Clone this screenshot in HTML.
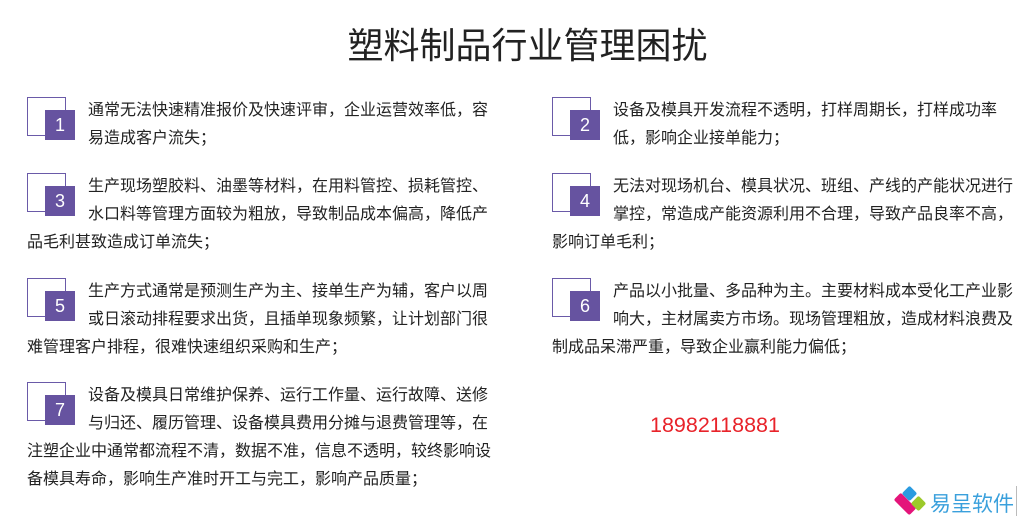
<!DOCTYPE html>
<html><head><meta charset="utf-8"><style>
body{margin:0;width:1021px;height:523px;background:#fff;position:relative;overflow:hidden;font-family:"Liberation Sans","Noto Sans CJK SC",sans-serif;color:#222}
.t{position:absolute;left:0;width:1055px;text-align:center;top:17px;font-size:36px;color:#222}
.it{position:absolute;font-size:16px;line-height:28px;white-space:nowrap}
.bx{float:left;position:relative;width:61px;height:46px}
.bx .o{position:absolute;left:0;top:0;width:37px;height:37px;border:1px solid #6a5aa8}
.bx .f{position:absolute;left:18px;top:13px;width:30px;height:30px;background:#6653a0;color:#fff;font-size:18px;line-height:30px;text-align:center}
.ph{position:absolute;left:650px;top:413px;font-size:21.5px;color:#e8232a}
</style></head><body>
<div class="t">塑料制品行业管理困扰</div>

<div class="it" style="left:27px;top:97px"><div class="bx"><div class="o"></div><div class="f">1</div></div>通常无法快速精准报价及快速评审，企业运营效率低，容<br>易造成客户流失；</div>
<div class="it" style="left:27px;top:173px"><div class="bx"><div class="o"></div><div class="f">3</div></div>生产现场塑胶料、油墨等材料，在用料管控、损耗管控、<br>水口料等管理方面较为粗放，导致制品成本偏高，降低产<br>品毛利甚致造成订单流失；</div>
<div class="it" style="left:27px;top:278px"><div class="bx"><div class="o"></div><div class="f">5</div></div>生产方式通常是预测生产为主、接单生产为辅，客户以周<br>或日滚动排程要求出货，且插单现象频繁，让计划部门很<br>难管理客户排程，很难快速组织采购和生产；</div>
<div class="it" style="left:27px;top:382px"><div class="bx"><div class="o"></div><div class="f">7</div></div>设备及模具日常维护保养、运行工作量、运行故障、送修<br>与归还、履历管理、设备模具费用分摊与退费管理等，在<br>注塑企业中通常都流程不清，数据不准，信息不透明，较终影响设<br>备模具寿命，影响生产准时开工与完工，影响产品质量；</div>

<div class="it" style="left:552px;top:97px"><div class="bx"><div class="o"></div><div class="f">2</div></div>设备及模具开发流程不透明，打样周期长，打样成功率<br>低，影响企业接单能力；</div>
<div class="it" style="left:552px;top:173px"><div class="bx"><div class="o"></div><div class="f">4</div></div>无法对现场机台、模具状况、班组、产线的产能状况进行<br>掌控，常造成产能资源利用不合理，导致产品良率不高，<br>影响订单毛利；</div>
<div class="it" style="left:552px;top:278px"><div class="bx"><div class="o"></div><div class="f">6</div></div>产品以小批量、多品种为主。主要材料成本受化工产业影<br>响大，主材属卖方市场。现场管理粗放，造成材料浪费及<br>制成品呆滞严重，导致企业赢利能力偏低；</div>

<div class="ph">18982118881</div>

<svg style="position:absolute;left:893px;top:486px" width="36" height="34" viewBox="0 0 36 34">
<rect x="11" y="2" width="11" height="11" rx="2" transform="rotate(45 16.5 7.5)" fill="#2a9be0"/>
<rect x="1" y="13" width="22" height="10" rx="2" transform="rotate(45 12 18)" fill="#e4147a"/>
<rect x="20" y="12" width="11" height="11" rx="2" transform="rotate(45 25.5 17.5)" fill="#9cc92a"/>
</svg>
<div style="position:absolute;left:930px;top:488px;font-size:21px;color:#3aa0dc">易呈软件</div>
<div style="position:absolute;left:1016px;top:486px;width:1px;height:30px;background:#bbb"></div>
</body></html>
